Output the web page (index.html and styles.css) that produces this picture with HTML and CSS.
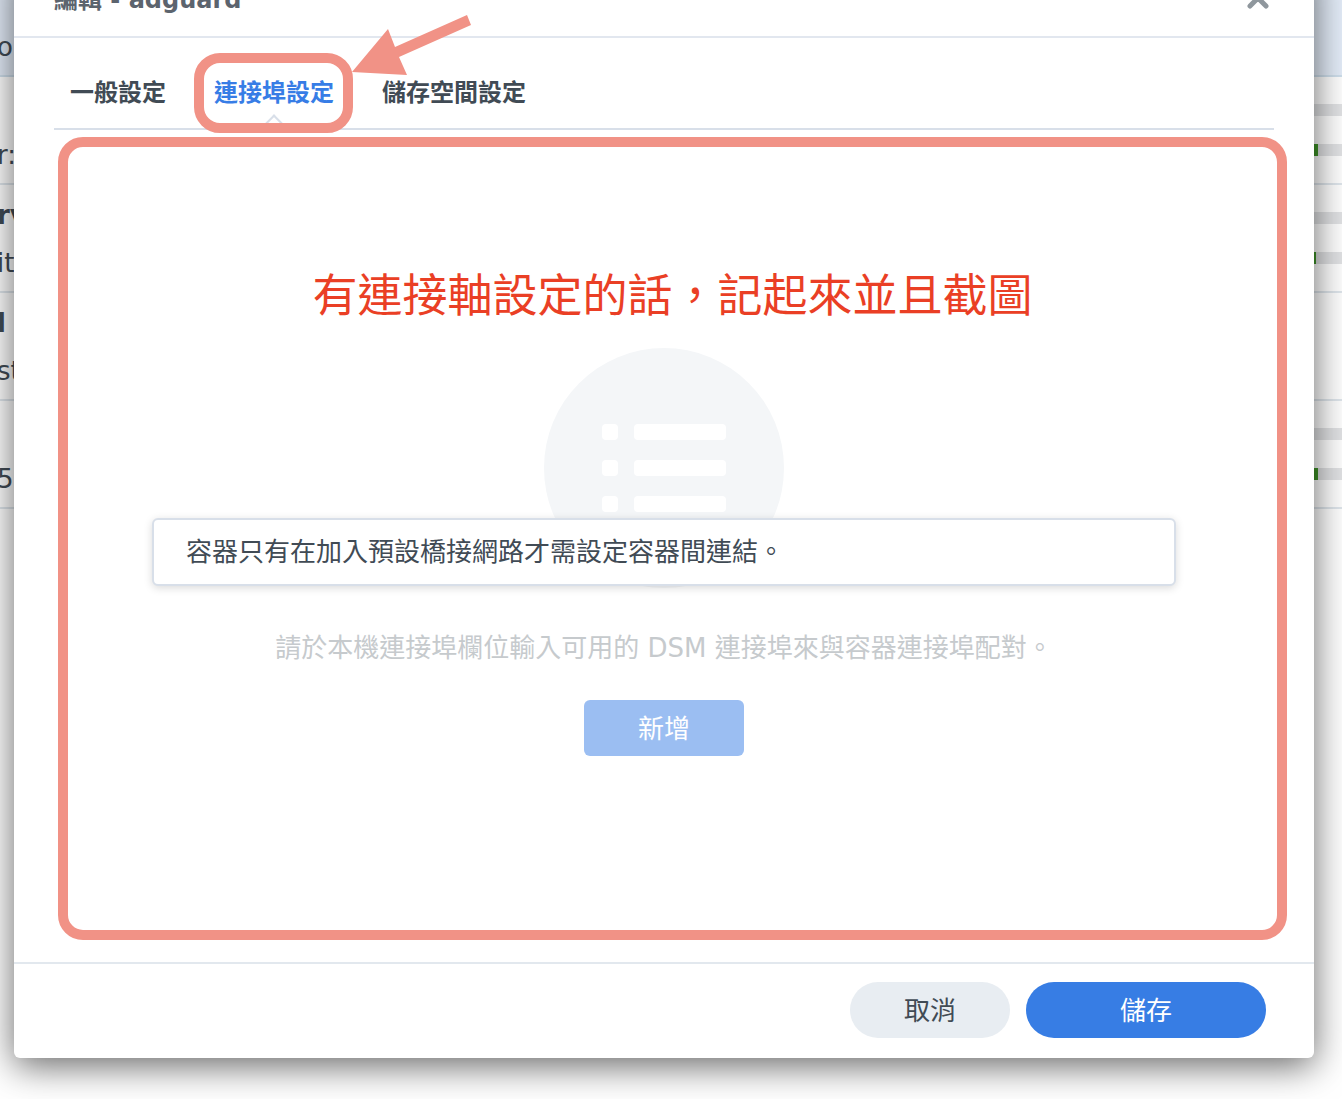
FILE: index.html
```
<!DOCTYPE html>
<html lang="zh-Hant">
<head>
  <meta charset="UTF-8">
  <meta name="viewport" content="width=device-width, initial-scale=1.0">
  <title>編輯 - adguard</title>
  <link rel="stylesheet" href="styles.css">
</head>
<body>
  <div class="containers">
    <div class="container-row selected">
      <div class="info"><span>&nbsp;</span><span>o</span></div>
    </div>
    <div class="container-row">
      <div class="info"><span>&nbsp;</span><span>r:</span></div>
      <div class="usage">
        <div class="bar"></div>
        <div class="bar"><div class="used" style="width: 88%"></div></div>
      </div>
    </div>
    <div class="container-row">
      <div class="info"><strong>rv</strong><span>it</span></div>
      <div class="usage">
        <div class="bar"></div>
        <div class="bar"><div class="used" style="width: 87%"></div></div>
      </div>
    </div>
    <div class="container-row">
      <div class="info"><strong>l</strong><span>st</span></div>
    </div>
    <div class="container-row">
      <div class="info"><span>&nbsp;</span><span>5</span></div>
      <div class="usage">
        <div class="bar"></div>
        <div class="bar"><div class="used" style="width: 88%"></div></div>
      </div>
    </div>
  </div>

  <div class="dialog" role="dialog" aria-labelledby="dialogTitle">
    <div class="dialog-header">
      <h1 id="dialogTitle">編輯 - adguard</h1>
      <button class="close" type="button" aria-label="關閉">
        <svg width="24" height="24" viewBox="0 0 24 24" fill="none" stroke="#8f979d" stroke-width="5" stroke-linecap="round">
          <path d="M4 5L20 21M20 5L4 21"/>
        </svg>
      </button>
    </div>

    <nav class="tabs">
      <a href="#general">一般設定</a>
      <a href="#port" class="active">連接埠設定<span class="caret"></span><span class="mark-tab"></span></a>
      <a href="#volume">儲存空間設定</a>
    </nav>

    <div class="dialog-body">
      <svg class="empty-icon" width="240" height="240" viewBox="0 0 240 240">
        <circle cx="120" cy="120" r="120" fill="#f4f6f8"/>
        <g fill="#fff">
          <rect x="58" y="76" width="16" height="16" rx="4"/>
          <rect x="90" y="76" width="92" height="16" rx="4"/>
          <rect x="58" y="112" width="16" height="16" rx="4"/>
          <rect x="90" y="112" width="92" height="16" rx="4"/>
          <rect x="58" y="148" width="16" height="16" rx="4"/>
          <rect x="90" y="148" width="92" height="16" rx="4"/>
        </g>
      </svg>
      <p class="note">容器只有在加入預設橋接網路才需設定容器間連結。</p>
      <p class="hint">請於本機連接埠欄位輸入可用的 DSM 連接埠來與容器連接埠配對。</p>
      <button class="add" type="button">新增</button>
      <div class="mark-body">有連接軸設定的話，記起來並且截圖</div>
    </div>

    <div class="dialog-footer">
      <button class="cancel" type="button">取消</button>
      <button class="save" type="button">儲存</button>
    </div>

    <svg class="mark-arrow" width="120" height="61" viewBox="0 0 120 61">
      <path d="M0 57L36 14L43 32L115 0L119 10L47 42L55 60Z" fill="#f19286"/>
    </svg>
  </div>
</body>
</html>
```

FILE: styles.css
```
* {
  box-sizing: border-box;
}
body {
  margin: 0;
  min-height: 100vh;
  overflow: hidden;
  background: #fff;
  color: #414b55;
  font-family: "DejaVu Sans", "Noto Sans CJK TC", sans-serif;
  font-size: 26px;
}

/* Container list behind the dialog */
.containers {
  margin-top: -31px;
}
.container-row {
  display: flex;
  justify-content: space-between;
  height: 108px;
  border-bottom: 2px solid #dfe6ec;
}
.container-row.selected {
  background: #e4edf9;
  border-color: #cfdfec;
}
.info {
  display: flex;
  flex-direction: column;
  padding-top: 6px;
  margin-left: -3px;
}
.info span,
.info strong {
  line-height: 48px;
}
.usage {
  width: 200px;
  padding-top: 27px;
}
.bar {
  height: 12px;
  margin-bottom: 28px;
  background: #e2e3e5;
}
.used {
  height: 12px;
  background: #3f9528;
}

/* Dialog */
.dialog {
  position: absolute;
  top: -42px;
  left: 14px;
  right: 28px;
  background: #fff;
  border-radius: 6px;
  box-shadow: 0 8px 36px rgba(0, 0, 0, 0.6);
}
.dialog-header {
  display: flex;
  align-items: center;
  justify-content: space-between;
  height: 80px;
  padding: 0 44px 0 40px;
  border-bottom: 2px solid #e2e7ef;
}
h1 {
  margin: 0;
  color: #5c646e;
  font-size: 24px;
}
button {
  padding: 0;
  border: none;
  color: inherit;
  font: inherit;
  cursor: pointer;
}
.close {
  display: flex;
  background: none;
}
.tabs {
  display: flex;
  gap: 48px;
  height: 92px;
  margin: 0 40px;
  padding: 0 16px;
  border-bottom: 2px solid #d8dfe9;
  font-size: 24px;
  font-weight: bold;
  line-height: 110px;
}
.tabs a {
  position: relative;
  color: #414b55;
  text-decoration: none;
}
.tabs .active {
  color: #377de6;
}
.caret {
  position: absolute;
  bottom: -8px;
  left: 50%;
  width: 18px;
  height: 18px;
  margin-left: -9px;
  border: solid #d8dfe9;
  border-width: 2px 0 0 2px;
  transform: rotate(45deg);
}
.dialog-body {
  position: relative;
  display: flex;
  flex-direction: column;
  align-items: center;
  padding: 218px 138px 206px;
}
.empty-icon {
  flex: none;
}
.note {
  position: relative;
  align-self: stretch;
  margin: -70px 0 0;
  padding: 0 32px;
  border: 2px solid #d8dfe9;
  border-radius: 6px;
  background: #fff;
  box-shadow: 0 2px 8px rgba(0, 0, 0, 0.15);
  line-height: 64px;
}
.hint {
  margin: 42px 0 32px;
  color: #c6cacd;
  line-height: 40px;
}
.add,
.cancel,
.save {
  width: 160px;
  height: 56px;
  padding-bottom: 4px;
}
.add {
  border-radius: 6px;
  background: #9bbef2;
  color: #fff;
}
.dialog-footer {
  display: flex;
  justify-content: flex-end;
  gap: 16px;
  padding: 18px 48px 20px;
  border-top: 2px solid #e2e8ee;
}
.cancel,
.save {
  border-radius: 28px;
  background: #e8edf2;
}
.save {
  width: 240px;
  background: #377de4;
  color: #fff;
}

/* Red annotations drawn over the dialog */
.mark-tab {
  position: absolute;
  top: 15px;
  bottom: -5px;
  left: -20px;
  right: -19px;
  border: 10px solid #f19286;
  border-radius: 26px;
}
.mark-body {
  position: absolute;
  top: 7px;
  bottom: 22px;
  left: 44px;
  right: 27px;
  padding-top: 118px;
  border: 10px solid #f19286;
  border-radius: 25px;
  color: #ea3f25;
  font-size: 45px;
  line-height: 64px;
  text-align: center;
  pointer-events: none;
}
.mark-arrow {
  position: absolute;
  top: 57px;
  left: 338px;
}
```
